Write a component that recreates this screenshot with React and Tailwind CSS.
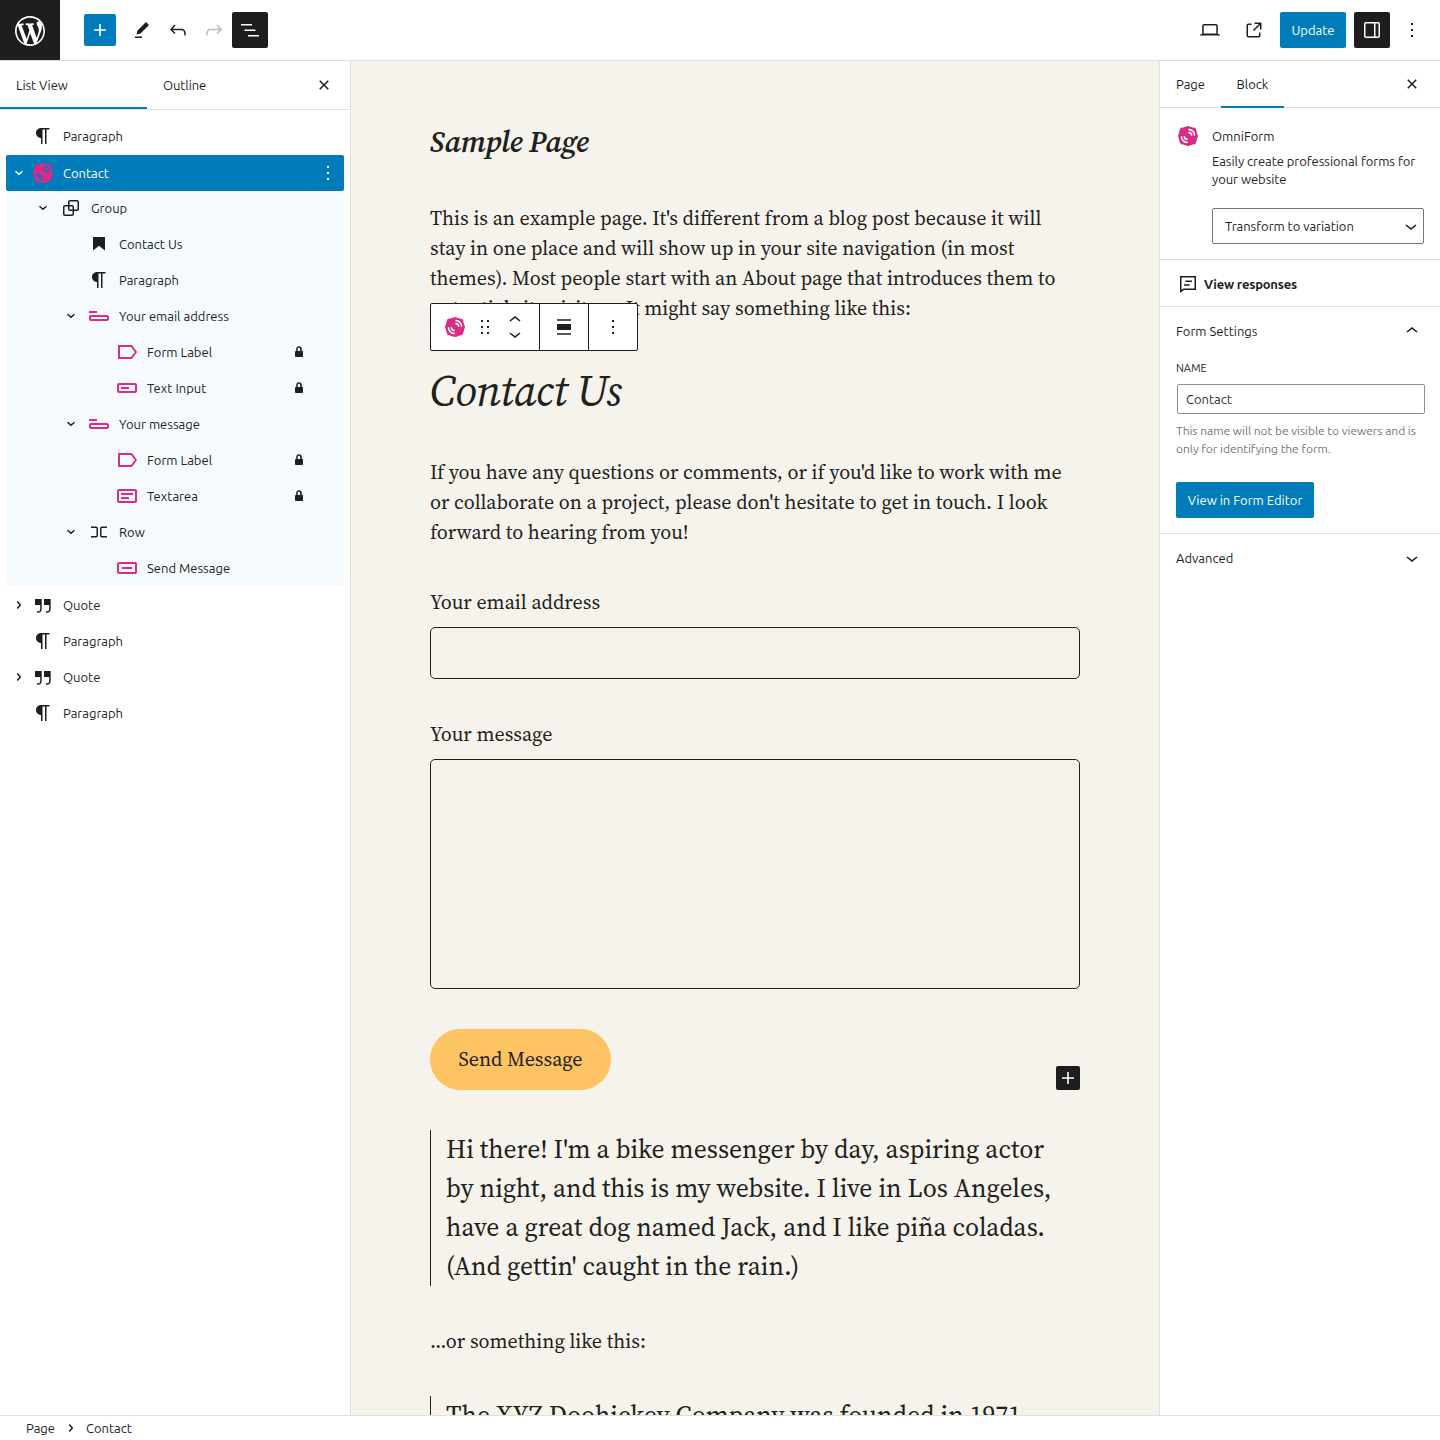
import React from 'react';

const P = {
  paragraph: 'm9.996 14v-.225h.004v6.225h1.5v-14.5h2.5v14.5h1.5v-14.5h3v-1.5h-8.504c-2.761 0-5 2.239-5 5 0 2.761 2.239 5 5 5z',
  plus: 'M18 11.2h-5.2V6h-1.6v5.2H6v1.6h5.2V18h1.6v-5.2H18z',
  edit: 'm19 7-3-3-8.5 8.5-1 4 4-1L19 7Zm-7 11.5H5V20h7v-1.5Z',
  undo: 'M18.3 11.7c-.6-.6-1.4-.9-2.3-.9H6.7l2.9-3.3-1.1-1-4.5 5L8.5 16l1-1-2.7-2.7H16c.5 0 .9.2 1.3.5 1 1 1 3.4 1 4.5v.3h1.5v-.2c0-1.5 0-4.3-1.5-5.7z',
  redo: 'M15.6 6.5l-1.1 1 2.9 3.3H8c-.9 0-1.7.3-2.3.9-1.4 1.5-1.4 4.2-1.4 5.6v.2h1.5v-.3c0-1.1 0-3.5 1-4.5.3-.3.7-.5 1.3-.5h9.2L14.5 15l1.1 1.1 4.6-4.6-4.6-5z',
  listView: 'M3 6h11v1.5H3V6Zm3.5 5.5h11V13h-11v-1.5ZM21 17H10v1.5h11V17Z',
  laptop: 'M20.5 16h-.7V8c0-1.1-.9-2-2-2H6.2c-1.1 0-2 .9-2 2v8h-.7c-.8 0-1.5.7-1.5 1.5h20c0-.8-.7-1.5-1.5-1.5zM5.7 8c0-.3.2-.5.5-.5h11.6c.3 0 .5.2.5.5v7.6H5.7V8z',
  external: 'M19.5 4.5h-7V6h4.44l-5.97 5.97 1.06 1.06L18 7.06v4.44h1.5v-7Zm-13 1a2 2 0 0 0-2 2v10a2 2 0 0 0 2 2h10a2 2 0 0 0 2-2v-3H17v3a.5.5 0 0 1-.5.5h-10a.5.5 0 0 1-.5-.5v-10a.5.5 0 0 1 .5-.5h3V5.5h-3Z',
  drawer: 'M18 4H6c-1.1 0-2 .9-2 2v12c0 1.1.9 2 2 2h12c1.1 0 2-.9 2-2V6c0-1.1-.9-2-2-2zm-4 14.5H6c-.3 0-.5-.2-.5-.5V6c0-.3.2-.5.5-.5h8v13zm4.5-.5c0 .3-.2.5-.5.5h-2.5v-13H18c.3 0 .5.2.5.5v12z',
  more: 'M13 19h-2v-2h2v2zm0-6h-2v-2h2v2zm0-6h-2V5h2v2z',
  close: 'M12 13.06l3.712 3.713 1.061-1.06L13.061 12l3.712-3.712-1.06-1.06L12 10.938 8.288 7.227l-1.061 1.06L10.939 12l-3.712 3.712 1.06 1.061L12 13.061z',
  group: 'M18 4h-7c-1.1 0-2 .9-2 2v3H6c-1.1 0-2 .9-2 2v7c0 1.1.9 2 2 2h7c1.1 0 2-.9 2-2v-3h3c1.1 0 2-.9 2-2V6c0-1.1-.9-2-2-2zm-4.5 14c0 .3-.2.5-.5.5H6c-.3 0-.5-.2-.5-.5v-7c0-.3.2-.5.5-.5h3V13c0 1.1.9 2 2 2h2.5v3zm0-4.5H11c-.3 0-.5-.2-.5-.5v-2.5H13c.3 0 .5.2.5.5v2.5zm5-.5c0 .3-.2.5-.5.5h-3V11c0-1.1-.9-2-2-2h-2.5V6c0-.3.2-.5.5-.5h7c.3 0 .5.2.5.5v7z',
  heading: 'M6 5v13.591l6-4.744 6 4.744V5H6Z',
  quote: 'M13 6v6h5.2v4c0 .8-.2 1.4-.5 1.7-.6.6-1.6.6-2.5.5h-.3v1.5h.5c1 0 2.3-.1 3.3-1 .6-.6 1-1.6 1-2.8V6H13zm-9 6h5.2v4c0 .8-.2 1.4-.5 1.7-.6.6-1.6.6-2.5.5h-.3v1.5h.5c1 0 2.3-.1 3.3-1 .6-.6 1-1.6 1-2.8V6H4v6z',
  row: 'M4 6.5h5a2 2 0 0 1 2 2v7a2 2 0 0 1-2 2H4V16h5a.5.5 0 0 0 .5-.5v-7A.5.5 0 0 0 9 8H4V6.5Zm16 0h-5a2 2 0 0 0-2 2v7a2 2 0 0 0 2 2h5V16h-5a.5.5 0 0 1-.5-.5v-7A.5.5 0 0 1 15 8h5V6.5Z',
  lock: 'M15 11h-.2V9c0-1.5-1.2-2.8-2.8-2.8S9.2 7.5 9.2 9v2H9c-.6 0-1 .4-1 1v4c0 .6.4 1 1 1h6c.6 0 1-.4 1-1v-4c0-.6-.4-1-1-1zm-1.8 0h-2.5V9c0-.7.6-1.2 1.2-1.2s1.2.6 1.2 1.2v2z',
  drag: 'M8 7h2V5H8v2zm0 6h2v-2H8v2zm0 6h2v-2H8v2zm6-14v2h2V5h-2zm0 8h2v-2h-2v2zm0 6h2v-2h-2v2z',
  up: 'M6.5 12.4L12 8l5.5 4.4-.9 1.2L12 10l-4.5 3.6-1-1.2z',
  down: 'M17.5 11.6L12 16l-5.5-4.4.9-1.2L12 14l4.5-3.6 1 1.2z',
  rightSmall: 'M10.862 8.04l3.419 3.989-3.419 3.988-1.139-.976 2.582-3.012-2.582-3.012 1.139-.977Z',
  alignNone: 'M5 15h14V9H5v6zm0 4.8h14v-1.5H5v1.5zM5 4.2v1.5h14V4.2H5z',
};

const WP =
  'M20 10c0-5.51-4.49-10-10-10C4.48 0 0 4.49 0 10c0 5.52 4.48 10 10 10 5.51 0 10-4.48 10-10zM7.78 15.37L4.37 6.22c.55-.02 1.17-.08 1.17-.08.5-.06.44-1.13-.06-1.11 0 0-1.45.11-2.37.11-.18 0-.37 0-.58-.01C4.12 2.69 6.87 1.11 10 1.11c2.33 0 4.45.87 6.05 2.34-.68-.11-1.65.39-1.65 1.58 0 .74.45 1.36.9 2.1.35.61.55 1.36.55 2.46 0 1.49-1.4 5-1.4 5l-3.03-8.37c.54-.02.82-.17.82-.17.5-.05.44-1.25-.06-1.22 0 0-1.44.12-2.38.12-.87 0-2.33-.12-2.33-.12-.5-.03-.56 1.2-.06 1.22l.92.08 1.26 3.41zM17.41 10c.24-.64.74-1.87.43-4.25.7 1.29 1.05 2.71 1.05 4.25 0 3.29-1.73 6.24-4.4 7.78.97-2.59 1.94-5.2 2.92-7.78zM6.1 18.09C3.12 16.65 1.11 13.53 1.11 10c0-1.3.23-2.48.72-3.59C3.25 10.3 4.67 14.2 6.1 18.09zm4.03-6.63l2.58 6.98c-.86.29-1.76.45-2.71.45-.79 0-1.57-.11-2.29-.33.81-2.38 1.62-4.74 2.42-7.1z';

function Icon({ name, className = '' }) {
  return (
    <svg viewBox="0 0 24 24" className={`size-6 shrink-0 fill-current ${className}`} aria-hidden="true">
      <path d={P[name]} />
    </svg>
  );
}

function Omni({ arcs = 'stroke-white' }) {
  return (
    <svg viewBox="0 0 24 24" className="size-6 shrink-0" aria-hidden="true">
      <g className="fill-[#db2b87]">
        <circle cx="12" cy="12" r="9.5" />
        <rect x="3.6" y="3.6" width="16.8" height="16.8" rx="3.4" />
        <rect x="3.8" y="3.8" width="16.4" height="16.4" rx="4.2" transform="rotate(45 12 12)" />
      </g>
      <g className={`fill-none ${arcs}`} strokeWidth="1.6" strokeLinecap="round">
        <path d="M13 5.6a5.6 5.6 0 0 1 5.5 5.5M13 8.6a2.7 2.7 0 0 1 2.6 2.6" />
        <path d="M11 18.4a5.6 5.6 0 0 1-5.5-5.5M11 15.4a2.7 2.7 0 0 1-2.6-2.6" />
      </g>
    </svg>
  );
}

function Pink({ children }) {
  return (
    <svg viewBox="0 0 24 24" className="size-6 shrink-0 fill-none stroke-[#db2b87] stroke-2" strokeLinejoin="round" aria-hidden="true">
      {children}
    </svg>
  );
}

const pink = {
  field: <Pink><path d="M2 8h8" /><rect x="3" y="12" width="18" height="4" rx="1" /></Pink>,
  label: <Pink><path d="M4 6h12.5l4.4 6-4.4 6H4z" /></Pink>,
  input: <Pink><rect x="3" y="8" width="18" height="8" rx="1" /><path d="M6 12h8" /></Pink>,
  textarea: <Pink><rect x="3" y="6" width="18" height="12" rx="1" /><path d="M6 10h12M6 14h8" /></Pink>,
  button: <Pink><rect x="3" y="7" width="18" height="10" rx="1" /><path d="M7 12h10" /></Pink>,
};

const INDENT = ['pl-px', 'pl-[25px]', 'pl-[53px]', 'pl-[81px]'];

function Row({ level = 0, chevron, icon, text, lock, className = 'h-9' }) {
  return (
    <div className={`flex items-center ${INDENT[level]} ${className}`}>
      <span className={`size-6 shrink-0 ${level ? 'mr-1' : ''}`}>
        {chevron === 'down' && <Icon name="rightSmall" className="rotate-90" />}
        {chevron === 'right' && <Icon name="rightSmall" />}
      </span>
      {typeof icon === 'string' ? <Icon name={icon} /> : icon}
      <span className="ml-2 grow pt-0.5">{text}</span>
      {lock && <Icon name="lock" className="mr-[33px]" />}
    </div>
  );
}

function TopBar() {
  return (
    <header className="flex h-[61px] shrink-0 items-stretch border-b border-[#e0e0e0]">
      <div className="flex size-[60px] items-center justify-center bg-[#1e1e1e] pt-0.5">
        <svg viewBox="-2 -2 24 24" className="size-9 fill-white"><path d={WP} /></svg>
      </div>
      <div className="ml-6 flex items-center">
        <button className="flex size-8 items-center justify-center rounded-xs bg-[#007cba] text-white"><Icon name="plus" /></button>
        <button className="ml-2 flex size-9 items-center justify-center"><Icon name="edit" /></button>
        <button className="flex size-9 items-center justify-center"><Icon name="undo" /></button>
        <button className="flex size-9 items-center justify-center text-[#bbb]"><Icon name="redo" /></button>
        <button className="flex size-9 items-center justify-center rounded-xs bg-[#1e1e1e] text-white"><Icon name="listView" /></button>
      </div>
      <div className="ml-auto flex items-center gap-2 pr-2.5">
        <button className="flex size-9 items-center justify-center"><Icon name="laptop" /></button>
        <button className="flex size-9 items-center justify-center"><Icon name="external" /></button>
        <button className="flex h-9 w-[66px] items-center justify-center rounded-xs bg-[#007cba] pt-0.5 text-white">Update</button>
        <button className="flex size-9 items-center justify-center rounded-xs bg-[#1e1e1e] text-white"><Icon name="drawer" /></button>
        <button className="-ml-1 flex size-9 items-center justify-center"><Icon name="more" /></button>
      </div>
    </header>
  );
}

function ListView() {
  return (
    <aside className="flex w-[351px] shrink-0 flex-col border-r border-[#e0e0e0]">
      <div className="flex h-[49px] items-stretch border-b border-[#e0e0e0]">
        <button className="w-[147px] border-b-2 border-[#007cba] pt-1 pl-4 text-left tracking-[-0.1px]">List View</button>
        <button className="pt-0.5 pl-4 tracking-[-0.1px]">Outline</button>
        <button className="ml-auto flex items-center pr-3.5"><Icon name="close" /></button>
      </div>
      <div className="px-1.5 pt-2">
        <Row icon="paragraph" text="Paragraph" />
        <div className="mt-px flex h-9 items-center rounded-xs bg-[#007cba] pr-1 text-white">
          <Row className="grow" chevron="down" icon={<Omni arcs="stroke-[#007cba]" />} text="Contact" />
          <Icon name="more" />
        </div>
        <div className="mb-px bg-[#f5fafd]">
          <Row className="h-[35px] pb-px" level={1} chevron="down" icon="group" text="Group" />
          <Row level={2} icon="heading" text="Contact Us" />
          <Row level={2} icon="paragraph" text="Paragraph" />
          <Row level={2} chevron="down" icon={pink.field} text="Your email address" />
          <Row level={3} icon={pink.label} text="Form Label" lock />
          <Row level={3} icon={pink.input} text="Text Input" lock />
          <Row level={2} chevron="down" icon={pink.field} text="Your message" />
          <Row level={3} icon={pink.label} text="Form Label" lock />
          <Row level={3} icon={pink.textarea} text="Textarea" lock />
          <Row level={2} chevron="down" icon="row" text="Row" />
          <Row level={3} icon={pink.button} text="Send Message" />
        </div>
        <Row chevron="right" icon="quote" text="Quote" />
        <Row icon="paragraph" text="Paragraph" />
        <Row chevron="right" icon="quote" text="Quote" />
        <Row icon="paragraph" text="Paragraph" />
      </div>
    </aside>
  );
}

function Toolbar() {
  return (
    <div className="absolute -top-[60px] left-0 flex h-12 divide-x divide-[#1e1e1e] rounded-xs border border-[#1e1e1e] bg-white text-[#1e1e1e]">
      <div className="flex w-[109px] items-center pl-3">
        <Omni />
        <Icon name="drag" className="ml-1.5" />
        <div className="ml-1.5 flex h-[38px] flex-col">
          <Icon name="up" />
          <Icon name="down" className="-mt-2.5" />
        </div>
      </div>
      <div className="flex w-[49px] items-center justify-center"><Icon name="alignNone" /></div>
      <div className="flex w-12 items-center justify-center"><Icon name="more" /></div>
    </div>
  );
}

function Canvas() {
  return (
    <main className="flex grow justify-center overflow-hidden bg-[#f6f3ec] font-['Source_Serif_4','Source_Serif_Pro','Liberation_Serif',serif] text-xl leading-[30px] text-[#1d221d]">
      <div className="flex h-0 w-[650px] flex-col gap-10 whitespace-nowrap pt-[60px]">
        <h1 className="h-[42px] shrink-0 text-[30px] leading-[42px] font-[570] tracking-[-0.25px] italic">Sample Page</h1>
        <p className="shrink-0">
          This is an example page. It's different from a blog post because it will<br />
          stay in one place and will show up in your site navigation (in most<br />
          themes). Most people start with an About page that introduces them to<br />
          potential site visitors. It might say something like this:
        </p>
        <section className="relative flex shrink-0 flex-col">
          <Toolbar />
          <h2 className="h-[54px] pt-px text-[44px] leading-[54px] font-[370] tracking-[-0.65px] italic">Contact Us</h2>
          <p className="mt-10">
            If you have any questions or comments, or if you'd like to work with me<br />
            or collaborate on a project, please don't hesitate to get in touch. I look<br />
            forward to hearing from you!
          </p>
          <div className="mt-10">Your email address</div>
          <div className="mt-2.5 h-[52px] rounded-[5px] border border-[#1d221d]" />
          <div className="mt-10">Your message</div>
          <div className="mt-2.5 h-[230px] rounded-[5px] border border-[#1d221d]" />
          <button className="mt-10 h-[61px] w-[181px] rounded-full bg-[#fec362] pb-px">Send Message</button>
          <button className="absolute right-0 bottom-0 flex size-6 items-center justify-center rounded-xs bg-[#1e1e1e] text-white"><Icon name="plus" /></button>
        </section>
        <blockquote className="shrink-0 border-l border-[#1d221d] pl-[15px] text-[25.63px] leading-[39px]">
          Hi there! I'm a bike messenger by day, aspiring actor<br />
          by night, and this is my website. I live in Los Angeles,<br />
          have a great dog named Jack, and I like piña coladas.<br />
          (And gettin' caught in the rain.)
        </blockquote>
        <p className="shrink-0">…or something like this:</p>
        <blockquote className="shrink-0 border-l border-[#1d221d] pl-[15px] text-[25.63px] leading-[39px]">
          The XYZ Doohickey Company was founded in 1971,
        </blockquote>
      </div>
    </main>
  );
}

function Settings() {
  return (
    <aside className="flex w-[281px] shrink-0 flex-col border-l border-[#e0e0e0]">
      <div className="flex h-[47px] items-stretch border-b border-[#e0e0e0]">
        <button className="w-[61px] pt-0.5 pl-4 text-left">Page</button>
        <button className="-mb-px w-[63px] border-b-2 border-[#007cba] pt-[3px]">Block</button>
        <button className="ml-auto flex items-center pr-4"><Icon name="close" /></button>
      </div>
      <div className="flex h-[152px] gap-3 border-b border-[#e0e0e0] px-4 pt-4">
        <Omni />
        <div className="flex grow flex-col">
          <h2 className="leading-6">OmniForm</h2>
          <p className="mt-1 leading-[18px] tracking-[-0.05px] whitespace-nowrap">Easily create professional forms for<br />your website</p>
          <div className="mt-5 flex h-9 w-[212px] items-center justify-between rounded-xs border border-[#757575] pl-3">
            <span className="pt-0.5 tracking-[-0.05px]">Transform to variation</span>
            <Icon name="down" />
          </div>
        </div>
      </div>
      <div className="flex h-[47px] items-center gap-1 border-b border-[#e0e0e0] pl-4 pt-0.5 font-semibold">
        <svg viewBox="0 0 24 24" className="size-6 fill-none stroke-current stroke-[1.5]">
          <path d="M4.75 4.75h14.5v12.5H7.6l-2.85 2.2V4.75zM9.5 9.2H16M8 13h5.5" />
        </svg>
        <span className="pt-0.5 tracking-[-0.2px]">View responses</span>
      </div>
      <section className="h-[227px] border-b border-[#e0e0e0] px-4">
        <div className="flex h-12 items-center justify-between"><span className="pt-0.5">Form Settings</span><Icon name="up" /></div>
        <div className="mt-[5px] h-4 text-[11px] leading-4">NAME</div>
        <div className="mt-2 ml-px flex h-[30px] w-[248px] items-center rounded-xs border border-[#8c8f94] pt-0.5 pl-2 text-[#2c3338]">Contact</div>
        <p className="mt-2 text-xs leading-[18px] tracking-[-0.04px] whitespace-nowrap text-[#757575]">This name will not be visible to viewers and is<br />only for identifying the form.</p>
        <button className="mt-6 flex h-9 w-[138px] items-center justify-center rounded-xs bg-[#007cba] pt-0.5 whitespace-nowrap text-white">View in Form Editor</button>
      </section>
      <div className="flex h-12 items-center justify-between px-4"><span className="pt-0.5">Advanced</span><Icon name="down" /></div>
    </aside>
  );
}

export default function App() {
  return (
    <div className="flex h-[1440px] w-[1440px] flex-col overflow-hidden bg-white font-[Ubuntu,'Noto_Sans',sans-serif] text-[13px] text-[#1e1e1e]">
      <TopBar />
      <div className="flex min-h-0 grow">
        <ListView />
        <Canvas />
        <Settings />
      </div>
      <footer className="flex h-[25px] shrink-0 items-center border-t border-[#e0e0e0] pl-[26px]">
        <span className="pt-0.5">Page</span>
        <Icon name="rightSmall" className="mr-[3px] ml-1" />
        <span className="pt-0.5">Contact</span>
      </footer>
    </div>
  );
}
